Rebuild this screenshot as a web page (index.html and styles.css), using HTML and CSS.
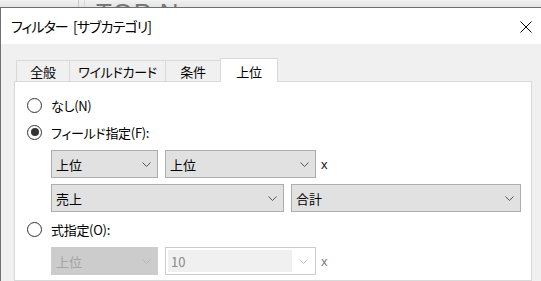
FILE: index.html
```html
<!DOCTYPE html>
<html lang="ja">
<head>
<meta charset="utf-8">
<link rel="stylesheet" href="styles.css">
</head>
<body>
<div class="desk">
  <div class="desk-gap"></div>
  <div class="desk-sep"></div>
  <div class="desk-title">TOP N</div>
</div>
<div class="dialog">
  <div class="titlebar">
    <span class="title">フィルター <span class="title-sub">[サブカテゴリ]</span></span>
    <svg class="close" width="12" height="12" viewBox="0 0 12 12"><path d="M0.5 0.5 L11.5 11.5 M11.5 0.5 L0.5 11.5" stroke="#000" stroke-width="1" fill="none"/></svg>
  </div>
  <div class="body">
    <div class="tabs">
      <div class="tab t1">全般</div>
      <div class="tab t2">ワイルドカード</div>
      <div class="tab t3">条件</div>
      <div class="tab active">上位</div>
    </div>
    <div class="panel">
      <div class="radio-row r1"><span class="radio"></span><span>なし(N)</span></div>
      <div class="radio-row r2"><span class="radio checked"></span><span>フィールド指定(F):</span></div>
      <div class="sel-row s1">
        <div class="select w-a"><span>上位</span><svg class="chev" width="9" height="5" viewBox="0 0 9 5"><polyline points="0.5,0.5 4.5,4.5 8.5,0.5" fill="none" stroke="#555" stroke-width="1"/></svg></div>
        <div class="select w-b"><span>上位</span><svg class="chev" width="9" height="5" viewBox="0 0 9 5"><polyline points="0.5,0.5 4.5,4.5 8.5,0.5" fill="none" stroke="#555" stroke-width="1"/></svg></div>
        <span class="x">x</span>
      </div>
      <div class="sel-row s2">
        <div class="select w-c"><span>売上</span><svg class="chev" width="9" height="5" viewBox="0 0 9 5"><polyline points="0.5,0.5 4.5,4.5 8.5,0.5" fill="none" stroke="#555" stroke-width="1"/></svg></div>
        <div class="select w-d"><span>合計</span><svg class="chev" width="9" height="5" viewBox="0 0 9 5"><polyline points="0.5,0.5 4.5,4.5 8.5,0.5" fill="none" stroke="#555" stroke-width="1"/></svg></div>
      </div>
      <div class="radio-row r3"><span class="radio"></span><span>式指定(O):</span></div>
      <div class="sel-row s3">
        <div class="select disabled w-a"><span>上位</span><svg class="chev" width="9" height="5" viewBox="0 0 9 5"><polyline points="0.5,0.5 4.5,4.5 8.5,0.5" fill="none" stroke="#b5b5b5" stroke-width="1"/></svg></div>
        <div class="combo w-b"><span class="field">10</span><svg class="chev" width="9" height="5" viewBox="0 0 9 5"><polyline points="0.5,0.5 4.5,4.5 8.5,0.5" fill="none" stroke="#c4c4c4" stroke-width="1"/></svg></div>
        <span class="x dis">x</span>
      </div>
    </div>
  </div>
</div>
</body>
</html>
```
FILE: styles.css
```css
* { box-sizing: border-box; }
html, body { margin: 0; padding: 0; }
body {
  width: 541px;
  height: 281px;
  overflow: hidden;
  background: #ebebeb;
  font-family: "Noto Sans CJK JP", "Noto Sans", sans-serif;
  font-feature-settings: "palt";
  color: #000;
}
.desk {
  height: 7px;
  overflow: hidden;
  display: flex;
  background: linear-gradient(#f2f2f2, #e4e4e4);
}
.desk-gap { width: 79px; border-right: 1px solid #c8c8c8; }
.desk-sep { width: 6px; border-right: 1px solid #d6d6d6; }
.desk-title {
  height: 7px;
  overflow: hidden;
  padding-left: 11px;
  font-family: "Liberation Sans", sans-serif;
  font-size: 26px;
  line-height: 26px;
  color: #777;
  letter-spacing: 1px;
}
.dialog {
  border-top: 1px solid #6f6f6f;
  border-left: 1px solid #707070;
  height: 274px;
  overflow: hidden;
  background: #f0f0f0;
}
.titlebar {
  height: 36px;
  background: #fff;
  display: flex;
  align-items: center;
  justify-content: space-between;
  padding: 0 9px 0 10px;
}
.title { font-size: 14px; letter-spacing: -0.9px; white-space: nowrap; }
.title-sub { margin-left: 3px; }
.close { display: block; margin-top: 1px; }
.body { padding: 14px 0 0 13px; }
.tabs {
  display: flex;
  align-items: flex-end;
  height: 23px;
  padding-left: 2px;
  position: relative;
  z-index: 1;
}
.tab {
  height: 21px;
  border: 1px solid #d9d9d9;
  border-bottom: none;
  margin-right: -1px;
  font-size: 13px;
  letter-spacing: -0.3px;
  display: flex;
  align-items: center;
  justify-content: center;
  background: #f0f0f0;
}
.t1 { width: 54px; }
.t2 { width: 97px; }
.t3 { width: 56px; }
.tab.active {
  width: 58px;
  height: 24px;
  margin-bottom: -1px;
  background: #fff;
  padding-top: 2px;
}
.panel {
  width: 518px;
  height: 200px;
  background: #fff;
  border: 1px solid #d9d9d9;
  padding: 13px 0 0 12px;
  font-size: 13px;
}
.radio-row {
  height: 20px;
  display: flex;
  align-items: center;
  letter-spacing: -0.3px;
}
.radio {
  width: 15px;
  height: 15px;
  border: 1px solid #333;
  border-radius: 50%;
  margin-right: 9px;
  display: flex;
  align-items: center;
  justify-content: center;
}
.radio.checked::after {
  content: "";
  width: 8px;
  height: 8px;
  border-radius: 50%;
  background: #333;
}
.r2 { margin-top: 7px; }
.sel-row {
  display: flex;
  align-items: center;
  gap: 7px;
  margin-left: 24px;
  height: 28px;
}
.s1 { margin-top: 8px; }
.s2 { margin-top: 6px; }
.r3 { margin-top: 7px; }
.s3 { margin-top: 8px; }
.select {
  height: 28px;
  background: #e1e1e1;
  border: 1px solid #adadad;
  display: flex;
  align-items: center;
  justify-content: space-between;
  padding: 0 6px 0 4px;
}
.select.disabled {
  background: #cccccc;
  border-color: #cccccc;
  color: #a3a3a3;
}
.w-a { width: 107px; }
.w-b { width: 151px; }
.w-c { width: 233px; }
.w-d { width: 230px; }
.chev { display: block; }
.combo {
  height: 28px;
  background: #fff;
  border: 1px solid #cccccc;
  display: flex;
  align-items: center;
  padding: 2px 7px 2px 2px;
  justify-content: space-between;
}
.field {
  width: 124px;
  height: 22px;
  background: #f0f0f0;
  color: #8a8a8a;
  display: flex;
  align-items: center;
  padding-left: 3px;
}
.x { font-size: 13px; color: #111; font-family: "Liberation Sans", sans-serif; margin-left: -2px; }
.x.dis { color: #7a7a8a; }
```
